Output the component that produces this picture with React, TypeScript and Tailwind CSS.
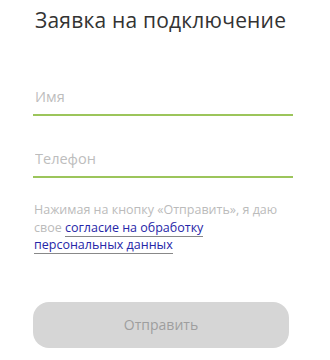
export default function App() {
  return (
    <div className="h-[360px] w-[330px] bg-white font-['Open_Sans',sans-serif]">
      <div className="flex flex-col pl-[33px] pr-[37px] pt-[6px]">
        <h1 className="pl-[2px] text-[21px] leading-[28px] font-normal tracking-[0.2px] text-[#333]">
          Заявка на подключение
        </h1>

        <div className="mt-[42px] flex flex-col gap-[22px]">
          <input
            type="text"
            placeholder="Имя"
            className="h-[40px] w-full border-b-2 border-[#9cc55b] bg-transparent px-[2px] pt-[2px] text-[14.5px] text-[#333] outline-none placeholder:text-[#bdbdbd]"
          />
          <input
            type="tel"
            placeholder="Телефон"
            className="h-[40px] w-full border-b-2 border-[#9cc55b] bg-transparent px-[2px] pt-[2px] text-[14.5px] text-[#333] outline-none placeholder:text-[#bdbdbd]"
          />
        </div>

        <p className="mt-[23px] whitespace-nowrap pl-[1px] text-[12.5px] leading-[17.5px] text-[#bbbbbb]">
          Нажимая на кнопку «Отправить», я даю
          <br />
          свое{" "}
          <a href="#" className="border-b border-[#888] text-[#2626a8]">
            согласие на обработку
          </a>
          <br />
          <a href="#" className="border-b border-[#888] text-[#2626a8]">
            персональных данных
          </a>
        </p>

        <button
          type="button"
          disabled
          className="mt-[48px] h-[46px] w-[256px] rounded-[16px] bg-[#d6d6d6] text-[14px] text-[#9e9e9e]"
        >
          Отправить
        </button>
      </div>
    </div>
  );
}
